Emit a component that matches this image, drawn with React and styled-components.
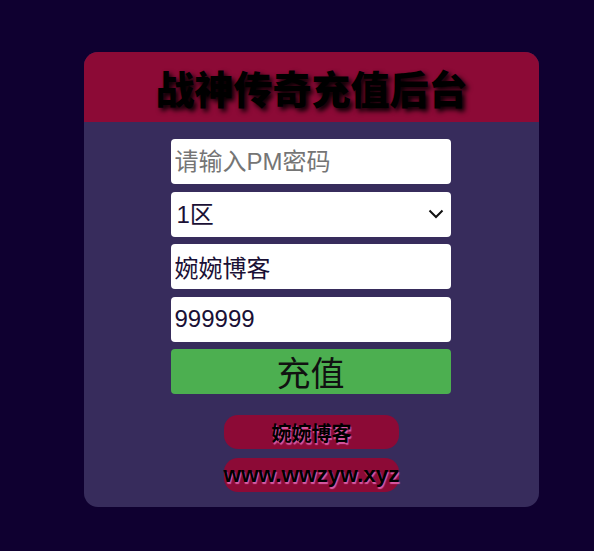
import styled, { createGlobalStyle } from 'styled-components';

const GlobalStyle = createGlobalStyle`
  html, body {
    margin: 0;
    padding: 0;
    background: #0f0030;
    font-family: "Liberation Sans", "Noto Sans CJK SC", sans-serif;
  }
`;

const Page = styled.div`
  padding: 52px 0 45px 84px;
`;

const Card = styled.div`
  width: 455px;
  background: #372c5c;
  border-radius: 14px;
  overflow: hidden;
  padding-bottom: 15px;
`;

const Header = styled.div`
  height: 70px;
  background: #8c0a36;
  display: flex;
  align-items: center;
  justify-content: center;
`;

const Title = styled.h1`
  margin: 0;
  font-family: "Noto Sans CJK SC", sans-serif;
  font-size: 39px;
  font-weight: 900;
  color: #000;
  text-shadow: 3px 3px 5px #000;
`;

const Form = styled.form`
  display: flex;
  flex-direction: column;
  align-items: center;
  gap: 7.5px;
  padding: 17px 2px 0 0;
`;

const Field = styled.input`
  box-sizing: border-box;
  width: 280px;
  height: 45px;
  border: none;
  border-radius: 4px;
  padding: 0 4px;
  background: #fff;
  font-family: "Liberation Sans", "Noto Sans CJK SC", sans-serif;
  font-size: 24px;
  color: #1a1035;
  outline: none;

  &::placeholder {
    color: #757575;
  }
`;

const SelectWrap = styled.div`
  position: relative;
  width: 280px;
  height: 45px;
`;

const Select = styled.select`
  box-sizing: border-box;
  width: 100%;
  height: 100%;
  border: none;
  border-radius: 4px;
  padding: 0 6px;
  background: #fff;
  appearance: none;
  font-family: "Liberation Sans", "Noto Sans CJK SC", sans-serif;
  font-size: 24px;
  color: #1a1035;
  outline: none;
`;

const Chevron = styled.svg`
  position: absolute;
  right: 7px;
  top: 17px;
  pointer-events: none;
`;

const Submit = styled.button`
  width: 280px;
  height: 45px;
  border: none;
  border-radius: 4px;
  background: #4caf50;
  font-family: "Noto Sans CJK SC", sans-serif;
  font-size: 34px;
  line-height: 45px;
  color: #111;
  padding: 0;
`;

const Links = styled.div`
  display: flex;
  flex-direction: column;
  align-items: center;
  gap: 9px;
  margin-top: 21px;
`;

const Pill = styled.a`
  width: 175px;
  height: 34px;
  border-radius: 14px;
  background: #8c0a36;
  display: flex;
  align-items: center;
  justify-content: center;
  white-space: nowrap;
  font-family: "Liberation Sans", "Noto Sans CJK SC", sans-serif;
  font-size: ${(p) => (p.$wide ? '22.5px' : '20px')};
  font-weight: bold;
  color: #000;
  text-decoration: none;
  text-shadow: 1px 2px 1px #d95ba6;
`;

export default function App() {
  return (
    <>
      <GlobalStyle />
      <Page>
        <Card>
          <Header>
            <Title>战神传奇充值后台</Title>
          </Header>
          <Form onSubmit={(e) => e.preventDefault()}>
            <Field type="password" placeholder="请输入PM密码" />
            <SelectWrap>
              <Select defaultValue="1">
                <option value="1">1区</option>
                <option value="2">2区</option>
              </Select>
              <Chevron width="16" height="10" viewBox="0 0 16 10">
                <path d="M1.5 1.5 L8 8 L14.5 1.5" fill="none" stroke="#111" strokeWidth="2" />
              </Chevron>
            </SelectWrap>
            <Field defaultValue="婉婉博客" />
            <Field defaultValue="999999" />
            <Submit type="submit">充值</Submit>
          </Form>
          <Links>
            <Pill href="#">婉婉博客</Pill>
            <Pill href="#" $wide>www.wwzyw.xyz</Pill>
          </Links>
        </Card>
      </Page>
    </>
  );
}
